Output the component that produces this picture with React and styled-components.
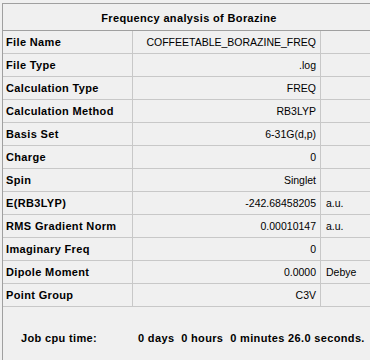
import React from "react";
import styled, { createGlobalStyle } from "styled-components";

const GlobalStyle = createGlobalStyle`
  html, body {
    margin: 0;
    padding: 0;
    overflow: hidden;
    background: #f0f0f0;
  }
  body {
    font-family: "Liberation Sans", Arial, sans-serif;
    color: #000;
  }
`;

const Panel = styled.div`
  margin: 3px 0 0 2px;
  width: 372px;
  height: 357px;
  border-top: 1px solid #a0a0a0;
  border-left: 1px solid #a0a0a0;
  display: flex;
  flex-direction: column;
`;

const Title = styled.div`
  height: 27px;
  display: flex;
  align-items: center;
  justify-content: center;
  padding-top: 1px;
  box-sizing: border-box;
  border-bottom: 1px solid #a0a0a0;
  font-weight: bold;
  font-size: 11px;
  letter-spacing: 0.35px;
`;

const Grid = styled.div`
  display: grid;
  grid-template-columns: 130px 188px 1fr;
`;

const Cell = styled.div`
  height: 22px;
  display: flex;
  align-items: center;
  border-bottom: 1px solid #c8c8c8;
  border-right: ${(p) => (p.$last ? "none" : "1px solid #c8c8c8")};
  white-space: nowrap;
  overflow: hidden;
`;

const Label = styled(Cell)`
  padding-left: 3px;
  font-weight: bold;
  font-size: 11px;
  letter-spacing: 0.35px;
`;

const Value = styled(Cell)`
  justify-content: flex-end;
  padding-right: 4px;
  font-size: 10.5px;
`;

const Unit = styled(Cell)`
  padding-left: 5px;
  font-size: 10.5px;
`;

const Footer = styled.div`
  display: flex;
  padding: 25px 0 0 18px;
  font-weight: bold;
  font-size: 11px;
  letter-spacing: 0.35px;
`;

const FooterLabel = styled.span`
  width: 117px;
`;

const FooterTime = styled.span`
  white-space: pre;
`;

const rows = [
  ["File Name", "COFFEETABLE_BORAZINE_FREQ", ""],
  ["File Type", ".log", ""],
  ["Calculation Type", "FREQ", ""],
  ["Calculation Method", "RB3LYP", ""],
  ["Basis Set", "6-31G(d,p)", ""],
  ["Charge", "0", ""],
  ["Spin", "Singlet", ""],
  ["E(RB3LYP)", "-242.68458205", "a.u."],
  ["RMS Gradient Norm", "0.00010147", "a.u."],
  ["Imaginary Freq", "0", ""],
  ["Dipole Moment", "0.0000", "Debye"],
  ["Point Group", "C3V", ""],
];

export default function App() {
  return (
    <>
      <GlobalStyle />
      <Panel>
        <Title>Frequency analysis of Borazine</Title>
        <Grid>
          {rows.map(([label, value, unit]) => (
            <React.Fragment key={label}>
              <Label>{label}</Label>
              <Value>{value}</Value>
              <Unit $last>{unit}</Unit>
            </React.Fragment>
          ))}
        </Grid>
        <Footer>
          <FooterLabel>Job cpu time:</FooterLabel>
          <FooterTime>{"0 days  0 hours  0 minutes 26.0 seconds."}</FooterTime>
        </Footer>
      </Panel>
    </>
  );
}
